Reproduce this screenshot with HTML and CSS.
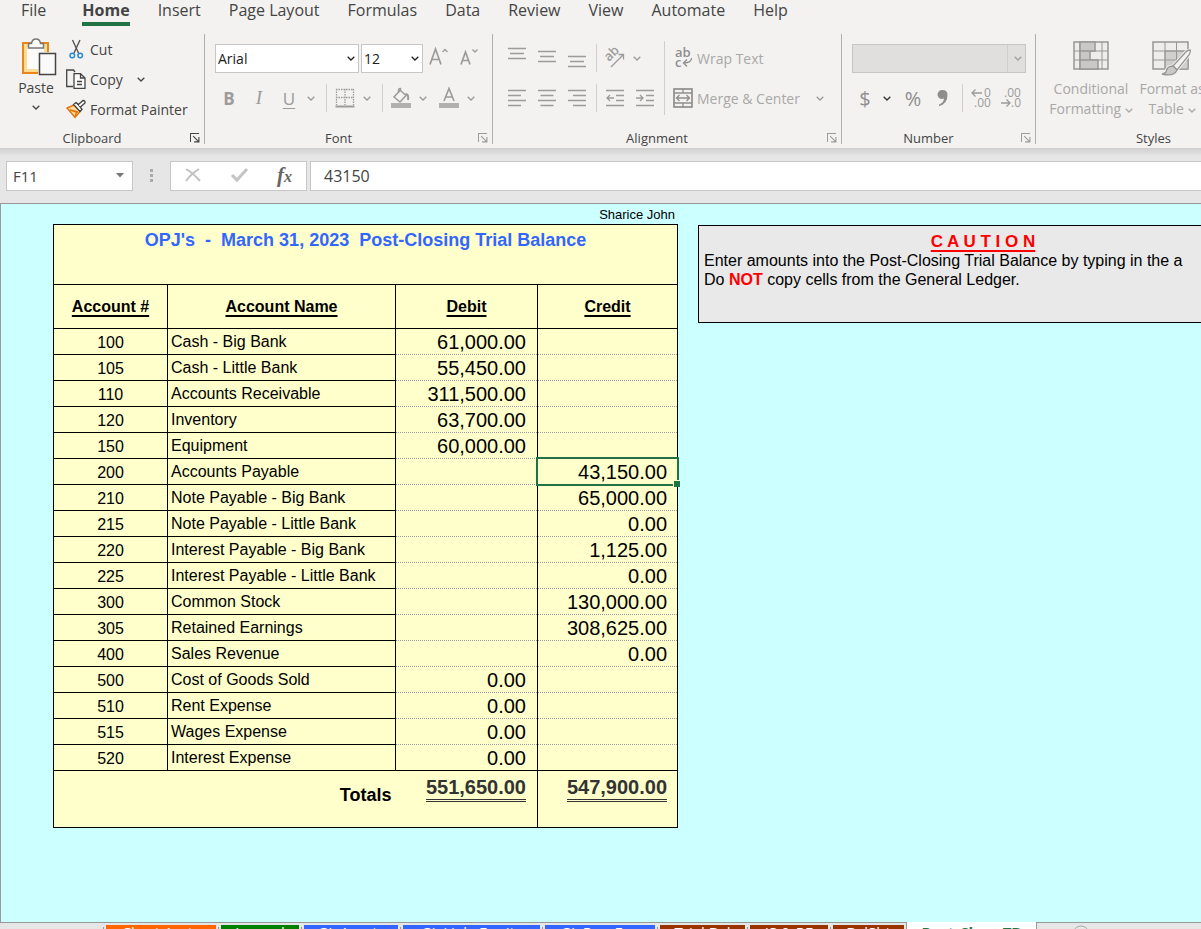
FILE: index.html
```html
<!DOCTYPE html>
<html lang="en">
<head>
    <meta charset="UTF-8">
    <meta name="viewport" content="width=device-width, initial-scale=1.0">
    <title>Post-Closing Trial Balance</title>
    <link rel="stylesheet" href="styles.css">
</head>
<body>
    <svg class="symbols" aria-hidden="true">
        <symbol id="chevron" viewBox="0 0 8 5"><path d="M0.7 0.7L4 4L7.3 0.7" fill="none" stroke="currentColor" stroke-width="1.3"/></symbol>
        <symbol id="launcher" viewBox="0 0 11 11"><path d="M0.5 10V0.5H10M3.5 3.5L9.5 9.5M9.8 4.5V9.8H4.5" fill="none" stroke="currentColor" stroke-width="1.2"/></symbol>
    </svg>

    <div class="app">
        <header class="ribbon">
            <nav class="menu">
                <a href="#" class="file">File</a>
                <a href="#" class="active">Home</a>
                <a href="#">Insert</a>
                <a href="#">Page Layout</a>
                <a href="#">Formulas</a>
                <a href="#">Data</a>
                <a href="#">Review</a>
                <a href="#">View</a>
                <a href="#">Automate</a>
                <a href="#">Help</a>
            </nav>

            <div class="groups">
                <section class="group clipboard">
                    <div class="group-body">
                        <button class="paste">
                            <svg width="44" height="39" viewBox="-8 0 44 39">
                                <rect x="1" y="5" width="25" height="30" fill="#fbfbfb" stroke="#e8851d" stroke-width="2"/>
                                <rect x="3.5" y="7.5" width="20" height="25" fill="none" stroke="#fbdc93" stroke-width="3"/>
                                <path d="M6.5 10V5.5H9.5Q10 1 14 1Q18 1 18.500 5.500H21.500V10Z" fill="#fff" stroke="#777" stroke-width="1.500"/>
                                <rect x="16" y="14" width="19" height="24" fill="#f3f2f1"/>
                                <rect x="17.500" y="15.500" width="16" height="21" fill="#fafafa" stroke="#444" stroke-width="1.500"/>
                            </svg>
                            <span>Paste</span>
                            <svg class="chev" width="8" height="5"><use href="#chevron"/></svg>
                        </button>
                        <div class="clip-list">
                            <button>
                                <svg width="20" height="20" viewBox="0 0 20 20">
                                    <path d="M6.500 1L12.500 14M14 1L8 14" stroke="#555" stroke-width="1.400"/>
                                    <circle cx="6.300" cy="16.500" r="2.300" fill="none" stroke="#2b88d8" stroke-width="1.500"/>
                                    <circle cx="14.200" cy="16.500" r="2.300" fill="none" stroke="#2b88d8" stroke-width="1.500"/>
                                </svg>
                                Cut
                            </button>
                            <button>
                                <svg width="20" height="20" viewBox="0 0 20 20" fill="none" stroke="#444" stroke-width="1.300">
                                    <path d="M7 17.500H0.700V1H7.500L9 3"/>
                                    <path d="M8 4.700H14.500L19 9V19.300H8Z" fill="#fbfbfb"/>
                                    <path d="M14.500 4.700V9H19M11 12.500H16M11 15.500H16"/>
                                </svg>
                                Copy
                                <svg class="chev" width="8" height="5"><use href="#chevron"/></svg>
                            </button>
                            <button>
                                <svg width="20" height="20" viewBox="0 0 20 20">
                                    <path d="M8 6L1 9L9 18.500L14.500 12Z" fill="#fbdc93" stroke="#e3720c" stroke-width="1.400"/>
                                    <path d="M4 11L10.500 13L9 18M4 11L12 13" fill="none" stroke="#e3720c" stroke-width="1.400"/>
                                    <path d="M7.500 5.500L10 3.500L12.500 5.500L17 1.500Q19.500 1.500 19 4L14.500 8L16 10.500L14 12.500Z" fill="#fafafa" stroke="#444" stroke-width="1.300"/>
                                    <path d="M10 3.500L16 10.500" stroke="#444"/>
                                </svg>
                                Format Painter
                            </button>
                        </div>
                    </div>
                    <footer>Clipboard<button aria-label="Clipboard settings"><svg width="10" height="10"><use href="#launcher"/></svg></button></footer>
                </section>

                <section class="group font off">
                    <div class="group-body rows">
                        <div class="row">
                            <label class="picker face">
                                <select aria-label="Font"><option>Arial</option></select>
                                <svg class="chev" width="8" height="5"><use href="#chevron"/></svg>
                            </label>
                            <label class="picker size">
                                <select aria-label="Font size"><option>12</option></select>
                                <svg class="chev" width="8" height="5"><use href="#chevron"/></svg>
                            </label>
                            <button class="tool" aria-label="Increase font size">
                                <svg width="20" height="22" viewBox="0 0 20 22" fill="none" stroke="currentColor">
                                    <path d="M1 17.500L6.500 2L12 17.500M3 12.500H10" stroke-width="1.700"/><path d="M13.500 5L16 2.500L18.500 5" stroke-width="1.300"/>
                                </svg>
                            </button>
                            <button class="tool" aria-label="Decrease font size">
                                <svg width="20" height="22" viewBox="0 0 20 22" fill="none" stroke="currentColor">
                                    <path d="M2 17.500L6.500 5L11 17.500M3.500 13.500H9.500" stroke-width="1.700"/><path d="M13.500 2.500L16 5L18.500 2.500" stroke-width="1.300"/>
                                </svg>
                            </button>
                        </div>
                        <div class="row">
                            <button class="tool bold">B</button>
                            <button class="tool italic">I</button>
                            <span class="split">
                                <button class="tool underline">U</button>
                                <button class="drop" aria-label="Underline styles"><svg class="chev" width="8" height="5"><use href="#chevron"/></svg></button>
                            </span>
                            <i class="sep"></i>
                            <span class="split">
                                <button class="tool" aria-label="Borders">
                                    <svg width="20" height="20" viewBox="0 0 20 20" fill="none" stroke="currentColor">
                                        <path d="M1 1.500H19M1 9.500H19M1.500 1V17M10 1V17M18.500 1V17" stroke-dasharray="1.500 1" stroke-width="1.300"/>
                                        <path d="M0.500 18.500H19.500" stroke-width="2"/>
                                    </svg>
                                </button>
                                <button class="drop" aria-label="Border styles"><svg class="chev" width="8" height="5"><use href="#chevron"/></svg></button>
                            </span>
                            <i class="sep"></i>
                            <span class="split">
                                <button class="tool" aria-label="Fill color">
                                    <svg width="20" height="20" viewBox="0 0 20 20" fill="none" stroke="currentColor" stroke-width="1.500">
                                        <path d="M9 2.500L3 9L9 14L15 7.500L9.500 2.500V0.500Q7.500 0 7.500 3V5"/>
                                        <path d="M14.500 6Q18 6 17 12" stroke-width="2"/>
                                        <rect x="0" y="15" width="20" height="5" fill="#b1b0af" stroke="none"/>
                                    </svg>
                                </button>
                                <button class="drop" aria-label="Fill colors"><svg class="chev" width="8" height="5"><use href="#chevron"/></svg></button>
                            </span>
                            <span class="split">
                                <button class="tool" aria-label="Font color">
                                    <svg width="20" height="20" viewBox="0 0 20 20" fill="none" stroke="currentColor" stroke-width="1.600">
                                        <path d="M5 13L10 0.500L15 13M6.500 9H13.500"/>
                                        <rect x="0" y="15" width="20" height="5" fill="#b1b0af" stroke="none"/>
                                    </svg>
                                </button>
                                <button class="drop" aria-label="Font colors"><svg class="chev" width="8" height="5"><use href="#chevron"/></svg></button>
                            </span>
                        </div>
                    </div>
                    <footer>Font<button aria-label="Font settings"><svg width="10" height="10"><use href="#launcher"/></svg></button></footer>
                </section>

                <section class="group alignment off">
                    <div class="group-body">
                        <div class="rows">
                            <div class="row">
                                <button class="tool" aria-label="Top align"><svg width="18" height="22" viewBox="0 0 18 22"><path d="M0 1.500H18M2 6.500H16M0 11.500H18" stroke="currentColor" stroke-width="1.500"/></svg></button>
                                <button class="tool" aria-label="Middle align"><svg width="18" height="22" viewBox="0 0 18 22"><path d="M0 4.500H18M2 9.500H16M0 14.500H18" stroke="currentColor" stroke-width="1.500"/></svg></button>
                                <button class="tool" aria-label="Bottom align"><svg width="18" height="22" viewBox="0 0 18 22"><path d="M0 9.500H18M2 14.500H16M0 19.500H18" stroke="currentColor" stroke-width="1.500"/></svg></button>
                                <i class="sep"></i>
                                <span class="split">
                                    <button class="tool" aria-label="Orientation">
                                        <svg width="22" height="22" viewBox="0 0 22 22">
                                            <text x="0" y="0" class="icon-text" transform="translate(5 15) rotate(-45)">ab</text>
                                            <path d="M7 20L19 8M14.500 7.500H19.500V12.500" fill="none" stroke="currentColor" stroke-width="1.300"/>
                                        </svg>
                                    </button>
                                    <button class="drop" aria-label="Orientation options"><svg class="chev" width="8" height="5"><use href="#chevron"/></svg></button>
                                </span>
                            </div>
                            <div class="row">
                                <button class="tool" aria-label="Align left"><svg width="18" height="18" viewBox="0 0 18 18"><path d="M0 1.500H18M0 6.500H13M0 11.500H18M0 16.500H13" stroke="currentColor" stroke-width="1.500"/></svg></button>
                                <button class="tool" aria-label="Center"><svg width="18" height="18" viewBox="0 0 18 18"><path d="M0 1.500H18M2.500 6.500H15.500M0 11.500H18M2.500 16.500H15.500" stroke="currentColor" stroke-width="1.500"/></svg></button>
                                <button class="tool" aria-label="Align right"><svg width="18" height="18" viewBox="0 0 18 18"><path d="M0 1.500H18M5 6.500H18M0 11.500H18M5 16.500H18" stroke="currentColor" stroke-width="1.500"/></svg></button>
                                <i class="sep"></i>
                                <button class="tool" aria-label="Decrease indent"><svg width="18" height="18" viewBox="0 0 18 18" fill="none" stroke="currentColor"><path d="M0 1.500H18M10 6.500H18M10 11.500H18M0 16.500H18" stroke-width="1.500"/><path d="M8 9H1M4 6L1 9L4 12" stroke-width="1.300"/></svg></button>
                                <button class="tool" aria-label="Increase indent"><svg width="18" height="18" viewBox="0 0 18 18" fill="none" stroke="currentColor"><path d="M0 1.500H18M10 6.500H18M10 11.500H18M0 16.500H18" stroke-width="1.500"/><path d="M0 9H7M4 6L7 9L4 12" stroke-width="1.300"/></svg></button>
                            </div>
                        </div>
                        <i class="sep tall"></i>
                        <div class="rows wrap-merge">
                            <div class="row">
                                <button class="wide">
                                    <svg width="20" height="22" viewBox="0 0 20 22">
                                        <text x="2" y="10" class="icon-text">ab</text>
                                        <text x="2" y="20" class="icon-text">c</text>
                                        <path d="M18.500 11Q18.500 16 10.500 16M14 12.500L10.500 16L14 19.500" fill="none" stroke="currentColor" stroke-width="1.300"/>
                                    </svg>
                                    Wrap Text
                                </button>
                            </div>
                            <div class="row">
                                <button class="wide">
                                    <svg width="20" height="20" viewBox="0 0 20 20" fill="none" stroke="currentColor" stroke-width="1.700">
                                        <rect x="1" y="1" width="18" height="18"/>
                                        <path d="M1 5H19M1 15H19M10 1V5M10 15V19" stroke-width="1.300"/>
                                        <path d="M3.500 10H16.500M6.500 7L3.500 10L6.500 13M13.500 7L16.500 10L13.500 13" stroke-width="1.300"/>
                                    </svg>
                                    Merge &amp; Center
                                </button>
                                <button class="drop" aria-label="Merge options"><svg class="chev" width="8" height="5"><use href="#chevron"/></svg></button>
                            </div>
                        </div>
                    </div>
                    <footer>Alignment<button aria-label="Alignment settings"><svg width="10" height="10"><use href="#launcher"/></svg></button></footer>
                </section>

                <section class="group number off">
                    <div class="group-body rows">
                        <div class="row">
                            <label class="picker format">
                                <select aria-label="Number format" disabled><option></option></select>
                                <svg class="chev" width="8" height="5"><use href="#chevron"/></svg>
                            </label>
                        </div>
                        <div class="row">
                            <span class="split">
                                <button class="tool sign">$</button>
                                <button class="drop dark" aria-label="Currencies"><svg class="chev" width="8" height="5"><use href="#chevron"/></svg></button>
                            </span>
                            <button class="tool sign">%</button>
                            <button class="tool" aria-label="Comma style">
                                <svg width="12" height="18" viewBox="0 0 12 18"><path d="M5.500 1A4.500 4.500 0 1 0 7 9.500Q6.500 14 2 15.500V17Q10.500 15 10.500 6Q10.500 1 5.500 1Z" fill="#8f8e8d"/></svg>
                            </button>
                            <i class="sep"></i>
                            <button class="tool" aria-label="Increase decimal">
                                <svg width="20" height="20" viewBox="0 0 20 20">
                                    <text x="13" y="9" class="digits">0</text><text x="3" y="19" class="digits">.00</text>
                                    <path d="M11 5H1M4.500 1.500L1 5L4.500 8.500" fill="none" stroke="currentColor" stroke-width="1.300"/>
                                </svg>
                            </button>
                            <button class="tool" aria-label="Decrease decimal">
                                <svg width="20" height="20" viewBox="0 0 20 20">
                                    <text x="3" y="9" class="digits">.00</text><text x="10" y="19" class="digits">.0</text>
                                    <path d="M0 15H9M5.500 11.500L9 15L5.500 18.500" fill="none" stroke="currentColor" stroke-width="1.300"/>
                                </svg>
                            </button>
                        </div>
                    </div>
                    <footer>Number<button aria-label="Number settings"><svg width="10" height="10"><use href="#launcher"/></svg></button></footer>
                </section>

                <section class="group styles off">
                    <div class="group-body">
                        <button class="big">
                            <svg width="36" height="30" viewBox="0 0 36 30" fill="none" stroke="#979695">
                                <rect x="1" y="1" width="34" height="27" fill="#eeedec" stroke-width="1.500"/>
                                <path d="M1 10H35M1 19H35M7 1V28M29 1V28"/>
                                <path d="M7 1H22V10H7ZM7 10H17V19H7ZM7 19H25V28H7Z" fill="#c9c8c7" stroke-width="1.500"/>
                            </svg>
                            <span>Conditional</span>
                            <span>Formatting <svg class="chev" width="8" height="5"><use href="#chevron"/></svg></span>
                        </button>
                        <button class="big">
                            <svg width="40" height="36" viewBox="0 0 40 36" fill="none" stroke="#979695">
                                <rect x="1" y="1" width="35" height="27" fill="#eeedec" stroke-width="1.500"/>
                                <path d="M13 10H36V28H13Z" fill="#d0cfce"/>
                                <path d="M1 10H36M1 19H36M13 1V28M24.500 1V28"/>
                                <path d="M38 9Q35 9 32 13L21 25Q15 25 14 31Q12 34 10 34Q22 36 25 29L37 14Q39 10 38 9Z" fill="#f3f2f1" stroke="#f3f2f1" stroke-width="3"/>
                                <path d="M38 9Q35 9 32 13L21 25L25 29L37 14Q39 10 38 9Z" fill="#f3f2f1" stroke-width="1.300"/>
                                <path d="M21 25Q15 25 14 31Q12 33 10 33Q22 36 25 29Z" fill="#c9c8c7" stroke-width="1.300"/>
                            </svg>
                            <span>Format as</span>
                            <span>Table <svg class="chev" width="8" height="5"><use href="#chevron"/></svg></span>
                        </button>
                    </div>
                    <footer>Styles</footer>
                </section>
            </div>
        </header>

        <div class="formula-bar">
            <label class="name-box">
                <input type="text" value="F11" aria-label="Name box">
                <svg width="9" height="5" viewBox="0 0 9 5"><path d="M0 0H8L4 4.500Z" fill="#777"/></svg>
            </label>
            <svg class="grip" width="3" height="13" viewBox="0 0 3 13"><path d="M0 0H3V3H0ZM0 5H3V8H0ZM0 10H3V13H0Z" fill="#aaa"/></svg>
            <div class="entry">
                <button aria-label="Cancel"><svg width="16" height="14" viewBox="0 0 16 14"><path d="M1 1Q8 5 15 13M14 1Q6 6 1 13" fill="none" stroke="#c0c0c0" stroke-width="2"/></svg></button>
                <button aria-label="Enter"><svg width="17" height="14" viewBox="0 0 17 14"><path d="M1 7L6 12L16 1" fill="none" stroke="#c4c4c4" stroke-width="3"/></svg></button>
                <button class="fx" aria-label="Insert function">f<small>x</small></button>
            </div>
            <input class="formula" type="text" value="43150" aria-label="Formula">
        </div>

        <main class="sheet">
            <div class="balance">
                <div class="owner">Sharice John</div>
                <table>
                    <colgroup><col class="c-num"><col class="c-name"><col class="c-debit"><col class="c-credit"></colgroup>
                    <thead>
                        <tr class="title"><th colspan="4">OPJ's  -  March 31, 2023  Post-Closing Trial Balance</th></tr>
                        <tr class="head"><th>Account #</th><th>Account Name</th><th>Debit</th><th>Credit</th></tr>
                    </thead>
                    <tbody>
                        <tr><td>100</td><td>Cash - Big Bank</td><td>61,000.00</td><td></td></tr>
                        <tr><td>105</td><td>Cash - Little Bank</td><td>55,450.00</td><td></td></tr>
                        <tr><td>110</td><td>Accounts Receivable</td><td>311,500.00</td><td></td></tr>
                        <tr><td>120</td><td>Inventory</td><td>63,700.00</td><td></td></tr>
                        <tr><td>150</td><td>Equipment</td><td>60,000.00</td><td></td></tr>
                        <tr><td>200</td><td>Accounts Payable</td><td></td><td class="selected">43,150.00</td></tr>
                        <tr><td>210</td><td>Note Payable - Big Bank</td><td></td><td>65,000.00</td></tr>
                        <tr><td>215</td><td>Note Payable - Little Bank</td><td></td><td>0.00</td></tr>
                        <tr><td>220</td><td>Interest Payable - Big Bank</td><td></td><td>1,125.00</td></tr>
                        <tr><td>225</td><td>Interest Payable - Little Bank</td><td></td><td>0.00</td></tr>
                        <tr><td>300</td><td>Common Stock</td><td></td><td>130,000.00</td></tr>
                        <tr><td>305</td><td>Retained Earnings</td><td></td><td>308,625.00</td></tr>
                        <tr><td>400</td><td>Sales Revenue</td><td></td><td>0.00</td></tr>
                        <tr><td>500</td><td>Cost of Goods Sold</td><td>0.00</td><td></td></tr>
                        <tr><td>510</td><td>Rent Expense</td><td>0.00</td><td></td></tr>
                        <tr><td>515</td><td>Wages Expense</td><td>0.00</td><td></td></tr>
                        <tr><td>520</td><td>Interest Expense</td><td>0.00</td><td></td></tr>
                    </tbody>
                    <tfoot>
                        <tr><th colspan="2">Totals</th><td><span>551,650.00</span></td><td><span>547,900.00</span></td></tr>
                    </tfoot>
                </table>
            </div>

            <aside class="caution">
                <h2>C A U T I O N</h2>
                <p>Enter amounts into the Post-Closing Trial Balance by typing in the a</p>
                <p>Do <strong>NOT</strong> copy cells from the General Ledger.</p>
            </aside>
        </main>

        <nav class="sheet-tabs">
            <a href="#" class="orange">Chart Accts</a>
            <a href="#" class="green">Journal</a>
            <a href="#" class="blue">GL Assets</a>
            <a href="#" class="blue">GL Liab_Equity</a>
            <a href="#" class="blue">GL Rev_Exp</a>
            <a href="#" class="brown">Trial Bal</a>
            <a href="#" class="brown">IS &amp; RE</a>
            <a href="#" class="brown">BalSht</a>
            <a href="#" class="current">Post-Close TB</a>
            <button aria-label="New sheet"><svg width="18" height="18" viewBox="0 0 18 18" fill="none" stroke="#aaa"><circle cx="9" cy="9" r="8"/><path d="M9 5V13M5 9H13"/></svg></button>
        </nav>
    </div>
</body>
</html>
```
FILE: styles.css
```css
* {
    box-sizing: border-box;
}

body {
    margin: 0;
    height: 100vh;
    overflow: hidden;
    font-family: "Open Sans", "Noto Sans", sans-serif;
    font-size: 14px;
    color: #444;
    background-color: #e6e6e6;
}

a {
    color: inherit;
    text-decoration: none;
}

button,
input,
select {
    margin: 0;
    padding: 0;
    border: none;
    background: none;
    font: inherit;
    color: inherit;
}

svg {
    flex: none;
    overflow: visible;
}

.symbols {
    display: none;
}

/* the tab strip runs past the bottom edge of the window */
.app {
    display: flex;
    flex-direction: column;
    height: calc(100vh + 20px);
}

/* ribbon */
.ribbon {
    background-color: #f3f2f1;
    padding-bottom: 4px;
    overflow: hidden;
}

.menu {
    display: flex;
    gap: 28px;
    height: 34px;
    padding-left: 21px;
    font-size: 16px;
    line-height: 20px;
    white-space: nowrap;
}

.menu .file {
    margin-right: 8px;
}

.menu .active {
    height: 26px;
    font-weight: bold;
    border-bottom: 4px solid #217346;
}

.groups {
    display: flex;
    height: 110px;
}

.group {
    display: flex;
    flex-direction: column;
    flex: none;
    border-right: 1px solid #b1b0af;
}

.clipboard { width: 205px; }
.font { width: 288px; }
.alignment { width: 349px; }
.number { width: 194px; }
.styles { width: 236px; }

.group-body {
    display: flex;
    height: 98px;
}

.group footer {
    display: grid;
    grid-template-columns: 1fr 20px;
    align-items: center;
    height: 12px;
    font-size: 13px;
    line-height: 12px;
    text-align: center;
}

.group footer button {
    display: flex;
    padding-left: 6px;
}

.styles footer {
    grid-template-columns: 1fr;
}

.off .group-body,
.off footer button {
    color: #9c9b9a;
}

.rows {
    display: flex;
    flex-direction: column;
    padding-top: 4px;
}

.row {
    display: flex;
    align-items: center;
    height: 40px;
}

.font .group-body,
.alignment .group-body {
    padding-left: 9px;
}

.number .group-body {
    padding-left: 8px;
}

.tool {
    display: flex;
    justify-content: center;
    align-items: center;
    width: 30px;
    height: 30px;
}

.drop {
    display: flex;
    justify-content: center;
    align-items: center;
    width: 14px;
    height: 30px;
}

.dark {
    color: #333;
}

.split {
    display: flex;
    margin-right: 4px;
}

.sep {
    width: 1px;
    height: 28px;
    margin: 0 3px 0 4px;
    background-color: #d0cfce;
}

.sep.tall {
    height: 74px;
    margin-top: 7px;
}

.bold {
    font-size: 17px;
    font-weight: bold;
}

.italic {
    font-family: "Liberation Serif", serif;
    font-size: 19px;
    font-style: italic;
}

.underline {
    font-size: 17px;
    text-decoration: underline;
    text-underline-offset: 3px;
}

.sign {
    font-size: 20px;
    color: #8f8e8d;
}

.icon-text {
    font-size: 13px;
    font-weight: 600;
    fill: currentColor;
}

.digits {
    font-size: 12px;
    fill: currentColor;
}

.paste {
    display: flex;
    flex-direction: column;
    align-items: center;
    width: 56px;
    margin-left: 8px;
    padding-top: 4px;
}

.paste span {
    line-height: 22px;
}

.paste .chev {
    margin-top: 6px;
}

.clip-list button {
    display: flex;
    align-items: center;
    gap: 4px;
    height: 30px;
    padding-left: 2px;
}

.clip-list .chev {
    margin-left: 10px;
}

/* drop-downs: the arrow shares the grid cell with the select */
.picker {
    display: grid;
    align-items: center;
    height: 29px;
    margin-left: 1px;
    border: 1px solid #c6c6c6;
    background-color: #fff;
    color: #222;
}

.picker select {
    grid-area: 1 / 1;
    appearance: none;
    width: 100%;
    height: 27px;
    padding-left: 2px;
}

.picker .chev {
    grid-area: 1 / 1;
    justify-self: end;
    margin-right: 3px;
    pointer-events: none;
}

.face { width: 144px; }

.size {
    width: 62px;
    margin: 0 1px 0 2px;
}

.format {
    grid-template-columns: 1fr 17px;
    width: 174px;
    margin-left: 2px;
    background-color: #e1dfdd;
    color: #a3a2a1;
}

.format select {
    border-right: 1px solid #c6c6c6;
}

.format .chev {
    grid-area: 1 / 2;
}

.wide {
    display: flex;
    align-items: center;
    gap: 4px;
    color: #a9a8a7;
    white-space: nowrap;
}

.wide svg {
    color: #8f8e8d;
}

.wrap-merge {
    padding-left: 5px;
}

.wide + .drop {
    margin-left: 13px;
}

.big {
    display: flex;
    flex-direction: column;
    align-items: center;
    width: 68px;
    padding-top: 7px;
    line-height: 20px;
    color: #a9a8a7;
    white-space: nowrap;
}

.big:first-child {
    width: 94px;
    margin-left: 8px;
}

.big > svg {
    height: 36px;
    margin-bottom: 2px;
}

.big:first-child > svg {
    height: 30px;
    margin-bottom: 8px;
}

.big .chev {
    vertical-align: middle;
}

/* formula bar */
.formula-bar {
    display: flex;
    align-items: center;
    flex: none;
    height: 55px;
    padding-left: 6px;
    background: linear-gradient(#cfcfcf, #e6e6e6 8px);
    font-size: 16px;
}

.name-box,
.entry,
.formula {
    height: 30px;
    border: 1px solid #c6c6c6;
    background-color: #fff;
}

.name-box {
    display: flex;
    align-items: center;
    width: 127px;
    padding: 0 7px 0 6px;
}

.name-box input {
    flex: 1;
    min-width: 0;
    font-size: 15px;
}

.grip {
    margin: 0 17px;
}

.entry {
    display: flex;
    justify-content: space-between;
    align-items: center;
    width: 137px;
    padding: 0 14px;
}

.fx {
    font-family: "Liberation Serif", serif;
    font-size: 21px;
    font-style: italic;
    font-weight: bold;
    line-height: 22px;
    color: #666;
}

.fx small {
    font-size: 16px;
}

.formula {
    flex: 1;
    min-width: 0;
    margin-left: 3px;
    padding-left: 13px;
    border-right: none;
}

/* worksheet */
.sheet {
    display: flex;
    align-items: flex-start;
    flex: 1;
    gap: 20px;
    padding-left: 52px;
    overflow: hidden;
    border: 1px solid #999;
    border-right: none;
    background-color: #cff;
    font-family: "Liberation Sans", Arial, sans-serif;
    font-size: 16px;
    color: #000;
}

.balance {
    flex: none;
}

.owner {
    height: 20px;
    padding-right: 3px;
    font-size: 13px;
    line-height: 22px;
    text-align: right;
}

table {
    width: 625px;
    table-layout: fixed;
    border-collapse: collapse;
    border: 1px solid #000;
    background-color: #ffc;
}

.c-num { width: 114px; }
.c-name { width: 228px; }
.c-debit { width: 142px; }
.c-credit { width: 140px; }

th,
td {
    padding: 0;
    border: 1px solid #000;
    line-height: 20px;
}

.title th {
    height: 60px;
    padding-top: 5px;
    font-size: 18px;
    color: #36f;
    vertical-align: top;
    white-space: pre;
}

.head th {
    height: 44px;
    text-decoration: underline 2px;
    text-underline-offset: 3px;
}

tbody td {
    height: 26px;
}

tbody td:nth-child(1) {
    padding-top: 2px;
    text-align: center;
}

tbody td:nth-child(2) {
    padding-left: 3px;
}

tbody td:nth-child(n + 3) {
    padding-right: 10px;
    font-size: 20px;
    text-align: right;
    border-top: 1px dotted #99a;
    border-bottom: 1px dotted #99a;
}

tbody td:nth-child(3) {
    padding-right: 11px;
}

tbody tr:first-child td {
    border-top: 1px solid #000;
}

tbody tr:last-child td {
    border-bottom: 1px solid #000;
}

tbody .selected {
    position: relative;
}

.selected::before {
    content: "";
    position: absolute;
    inset: -2px;
    border: 2px solid #217346;
}

.selected::after {
    content: "";
    position: absolute;
    right: -3px;
    bottom: -3px;
    width: 6px;
    height: 6px;
    background-color: #217346;
    border-top: 1px solid #ffc;
    border-left: 1px solid #ffc;
}

tfoot th,
tfoot td {
    height: 57px;
    text-align: right;
}

tfoot th {
    padding-right: 4px;
    padding-bottom: 8px;
    border-right: none;
    font-size: 18px;
    vertical-align: middle;
}

tfoot td {
    padding-top: 6px;
    padding-right: 10px;
    font-size: 20px;
    font-weight: bold;
    color: #333;
    vertical-align: top;
}

tfoot th + td {
    padding-right: 11px;
    border-left: none;
}

tfoot span {
    display: inline-block;
    height: 25px;
    border-bottom: 3px double #333;
}

.caution {
    flex: none;
    width: 570px;
    height: 98px;
    margin-top: 21px;
    padding: 6px 5px;
    border: 1px solid #000;
    background-color: #e9e9e9;
    line-height: 19px;
}

.caution h2 {
    margin: 0;
    font-size: 17px;
    color: #f00;
    text-align: center;
    text-decoration: underline 2px;
    text-underline-offset: 3px;
}

.caution p {
    margin: 0;
    white-space: nowrap;
}

.caution strong {
    color: #f00;
}

/* sheet tabs */
.sheet-tabs {
    display: flex;
    flex: none;
    gap: 5px;
    height: 26px;
    padding: 2px 0 0 106px;
    font-size: 15px;
    line-height: 14px;
    text-align: center;
    white-space: nowrap;
    color: #fff;
}

.sheet-tabs a {
    flex: none;
    width: 110px;
}

.sheet-tabs a:not(.current) {
    box-shadow: -2px 2px 0 #e6e6e6, -3px 2px 0 #999;
}

.orange { background-color: #f60; }
.green { background-color: #008000; }
.blue { background-color: #36f; }
.brown { background-color: #930; }

.sheet-tabs .green { width: 78px; }
.sheet-tabs .green + .blue { width: 94px; }
.sheet-tabs .green + .blue + .blue { width: 137px; }
.sheet-tabs .blue + .blue + .blue { width: 110px; }
.sheet-tabs .brown { width: 78px; }
.sheet-tabs .blue + .brown { width: 85px; }
.sheet-tabs .brown + .brown + .brown { width: 71px; }

.sheet-tabs .current {
    width: 131px;
    margin: -3px 0 0 -3px;
    padding-top: 3px;
    border: 1px solid #999;
    border-top: none;
    background-color: #fff;
    font-weight: bold;
    color: #217346;
}

.sheet-tabs button {
    display: flex;
    margin-left: 30px;
}
```
